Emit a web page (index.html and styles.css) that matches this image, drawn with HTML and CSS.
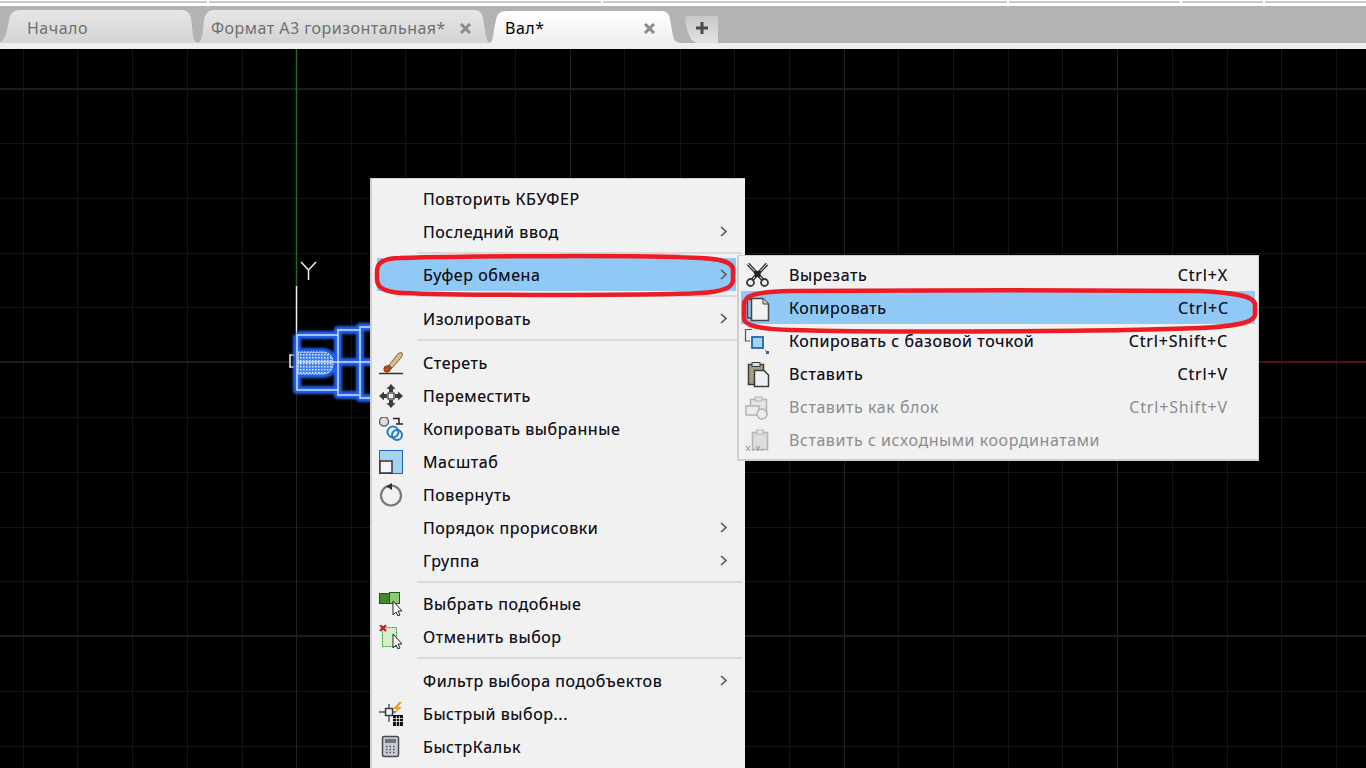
FILE: index.html
```html
<!DOCTYPE html>
<html lang="ru">
<head>
<meta charset="utf-8">
<title>Вал</title>
<link rel="stylesheet" href="styles.css">
</head>
<body>
<div class="topstrip">
  <i class="seg s1"></i><i class="seg s2"></i><i class="seg s3"></i><i class="seg s4"></i><i class="seg s5"></i><i class="seg s6"></i>
</div>
<div class="tabbar">
  <div class="tab t1">
    <svg class="tabshape" width="197" height="37"><defs><linearGradient id="g1" x1="0" y1="0" x2="0" y2="1"><stop offset="0" stop-color="#e6e6e6"/><stop offset="1" stop-color="#d4d4d4"/></linearGradient></defs><path d="M-4 37C2 37 5 33 7 24L9 14C10 8 13 4 20 4H181C187 4 190 7 191 12L193 30C194 35 196 37 199 37Z" fill="url(#g1)"/></svg>
    <span class="tabtext">Начало</span>
  </div>
  <div class="tab t2">
    <svg class="tabshape" width="293" height="37"><path d="M0 37C3 37 5 33 6 24L7 14C8 8 11 4 18 4H277C282 4 285 7 286 12L289 30C290 35 291 37 294 37Z" fill="url(#g1)"/></svg>
    <span class="tabtext">Формат А3 горизонтальная*</span><svg class="close" width="13" height="13"><path d="M2 2L11 11M11 2L2 11" stroke="#8c8c8c" stroke-width="3"/></svg>
  </div>
  <div class="tab t3">
    <svg class="tabshape" width="188" height="37"><defs><linearGradient id="g2" x1="0" y1="0" x2="0" y2="1"><stop offset="0" stop-color="#ffffff"/><stop offset="1" stop-color="#efefef"/></linearGradient></defs><path d="M-1 37C2 37 3 33 4 24L6 14C7 8 10 5 17 5H172C177 5 179 8 180 13L183 30C184 35 187 37 192 37Z" fill="url(#g2)"/></svg>
    <span class="tabtext on">Вал*</span><svg class="close" width="13" height="13"><path d="M2 2L11 11M11 2L2 11" stroke="#8c8c8c" stroke-width="3"/></svg>
  </div>
  <div class="tab plus">
    <svg class="tabshape" width="33" height="37"><defs><linearGradient id="g3" x1="0" y1="0" x2="0" y2="1"><stop offset="0" stop-color="#c8c8c8"/><stop offset="1" stop-color="#e2e2e2"/></linearGradient></defs><path d="M0 13C0 11 1 10 3 10H33V37H14C6 37 3 30 0 13Z" fill="url(#g3)"/></svg>
    <svg class="plusglyph" width="12" height="12"><path d="M4.500 0h3v4.500H12v3H7.500V12h-3V7.500H0v-3h4.500z" fill="#4a4a4a"/></svg>
  </div>
</div>
<div class="whitestrip"></div>
<main class="canvas">
  <svg class="world" width="1366" height="719" viewBox="0 49 1366 719">
    <defs>
      <pattern id="dots" width="3" height="3" patternUnits="userSpaceOnUse"><rect width="3" height="3" fill="#3f80ee"/><rect width="1.500" height="1.500" fill="#dfeaff"/></pattern>
    </defs>
    <g class="grid-minor">
      <path d="M23.500 49V768M77.500 49V768M132.500 49V768M187.500 49V768M242.500 49V768M351.500 49V768M405.500 49V768M461.500 49V768M515.500 49V768M624.500 49V768M680.500 49V768M734.500 49V768M789.500 49V768M898.500 49V768M953.500 49V768M1008.500 49V768M1062.500 49V768M1172.500 49V768M1227.500 49V768M1281.500 49V768M1336.500 49V768"/>
      <path d="M0 143.500H1366M0 198.500H1366M0 253.500H1366M0 307.500H1366M0 417.500H1366M0 472.500H1366M0 527.500H1366M0 581.500H1366M0 691.500H1366M0 746.500H1366"/>
    </g>
    <g class="grid-major">
      <path d="M570.500 49V768M844.500 49V768M1117.500 49V768M296.500 362V768"/>
      <path class="thick" d="M0 89H1366M0 362H296M0 636H1366"/>
    </g>
    <path class="axis-x" d="M296 362H1366"/>
    <path class="axis-y" d="M296.500 49V286"/>
    <path class="ucs" d="M296.500 286V352"/>
    <path class="ucs" d="M301 262L308.500 270L316 262M308.500 270V280"/>
    <path class="ucs" d="M295 355H290V367H295"/>
    <g class="sel-glow">
      <path d="M297 335H338V330H360V327H372M297 335V390H338V395H360V398H372M338 330V395M360 327V398M297 362H372"/>
      <path d="M298 352H322C330 352 333 357 333 363C333 369 330 374 322 374H298Z"/>
    </g>
    <path class="bullet" d="M298 352H322C330 352 333 357 333 363C333 369 330 374 322 374H298Z"/>
    <g class="sel-line">
      <path d="M297 335H338V330H360V327H372M297 335V390H338V395H360V398H372M338 330V395M360 327V398M297 362H372"/>
    </g>
  </svg>

  <nav class="menu">
    <div class="row"><span class="ic"></span><span class="lb">Повторить КБУФЕР</span></div>
    <div class="row"><span class="ic"></span><span class="lb">Последний ввод</span><svg class="arr" width="7" height="11"><path d="M1 1L6 5.500L1 10" fill="none" stroke="#555" stroke-width="1.600"/></svg></div>
    <div class="sep short"></div>
    <div class="row hi"><span class="ic"></span><span class="lb">Буфер обмена</span><svg class="arr" width="7" height="11"><path d="M1 1L6 5.500L1 10" fill="none" stroke="#555" stroke-width="1.600"/></svg></div>
    <div class="sep"></div>
    <div class="row"><span class="ic"></span><span class="lb">Изолировать</span><svg class="arr" width="7" height="11"><path d="M1 1L6 5.500L1 10" fill="none" stroke="#555" stroke-width="1.600"/></svg></div>
    <div class="sep"></div>
    <div class="row"><span class="ic">
      <svg width="24" height="24"><path d="M0 22.500H24" stroke="#333" stroke-width="1.500"/><path d="M10 14L18 4C19 2 22 1 23 2C24 3 23 6 21 8L13 17Z" fill="#d8bd82" stroke="#7c6a48"/><path d="M10 14L13 17L11 19L8 16Z" fill="#9aa0a6" stroke="#555"/><circle cx="8" cy="18" r="3.200" fill="#c44a08" stroke="#6e2a04" stroke-width=".7"/></svg>
    </span><span class="lb">Стереть</span></div>
    <div class="row"><span class="ic">
      <svg width="24" height="24"><rect x="9" y="9" width="6" height="6" fill="#eee" stroke="#333" stroke-width="1.200"/><path d="M12 0L16.500 5H14V8H10V5H7.500ZM12 24L16.500 19H14V16H10V19H7.500ZM0 12L5 7.500V10H8V14H5V16.500ZM24 12L19 7.500V10H16V14H19V16.500Z" fill="#3d3d3d"/></svg>
    </span><span class="lb">Переместить</span></div>
    <div class="row"><span class="ic">
      <svg width="24" height="24"><circle cx="5" cy="4.500" r="4.500" fill="#ddd" stroke="#666" stroke-width="1.500"/><path d="M14 1.500H20V7M17 7H24" fill="none" stroke="#222" stroke-width="1.500"/><circle cx="14" cy="15" r="5.500" fill="#e8f2fa" stroke="#2478c8" stroke-width="2"/><circle cx="18" cy="18" r="5" fill="none" stroke="#2478c8" stroke-width="2"/></svg>
    </span><span class="lb">Копировать выбранные</span></div>
    <div class="row"><span class="ic">
      <svg width="24" height="24"><rect x=".5" y=".5" width="23" height="23" fill="#a5d2ef" stroke="#1c68b4"/><rect x="1" y="11" width="12" height="12" fill="#f4f4f4" stroke="#30363d" stroke-width="1.500"/></svg>
    </span><span class="lb">Масштаб</span></div>
    <div class="row"><span class="ic">
      <svg width="24" height="24"><circle cx="12" cy="12.500" r="10" fill="none" stroke="#777" stroke-width="2.200"/><path d="M7 3.500L13 0V7Z" fill="#333"/></svg>
    </span><span class="lb">Повернуть</span></div>
    <div class="row"><span class="ic"></span><span class="lb">Порядок прорисовки</span><svg class="arr" width="7" height="11"><path d="M1 1L6 5.500L1 10" fill="none" stroke="#555" stroke-width="1.600"/></svg></div>
    <div class="row"><span class="ic"></span><span class="lb">Группа</span><svg class="arr" width="7" height="11"><path d="M1 1L6 5.500L1 10" fill="none" stroke="#555" stroke-width="1.600"/></svg></div>
    <div class="sep short"></div>
    <div class="row"><span class="ic">
      <svg width="24" height="24"><rect x=".5" y="1.500" width="11" height="10" fill="#3f8a2c" stroke="#1d5a18"/><rect x="10.500" y=".5" width="10" height="11" fill="#8cc878" stroke="#1d5a18"/><path d="M14 9V23L17 20L19 24L21 23L19 19H23Z" fill="#fff" stroke="#222"/></svg>
    </span><span class="lb">Выбрать подобные</span></div>
    <div class="row"><span class="ic">
      <svg width="24" height="24"><rect x="3.500" y="2.500" width="14" height="19" fill="#d6efc8" stroke="#2c9a2c" stroke-dasharray="2 1"/><path d="M1 0L7 6M7 0L1 6" stroke="#c0202a" stroke-width="2.200"/><path d="M14 9V23L17 20L19 24L21 23L19 19H23Z" fill="#fff" stroke="#222"/></svg>
    </span><span class="lb">Отменить выбор</span></div>
    <div class="sep"></div>
    <div class="row"><span class="ic"></span><span class="lb">Фильтр выбора подобъектов</span><svg class="arr" width="7" height="11"><path d="M1 1L6 5.500L1 10" fill="none" stroke="#555" stroke-width="1.600"/></svg></div>
    <div class="row"><span class="ic">
      <svg width="24" height="24"><path d="M0 10H6M14 10H17M10 2V6M10 14V20" stroke="#555" stroke-width="1.400"/><rect x="6.500" y="6.500" width="7" height="7" fill="#f4f4f4" stroke="#333" stroke-width="1.400"/><path d="M20 0L14 7H18L15 12L23 5H19L23 0Z" fill="#f29a1f"/><rect x="14" y="13" width="10" height="11" fill="#111"/><path d="M14 16.500H24M14 19.500H24M17.500 14V24M20.500 14V24" stroke="#eee" stroke-width=".8"/></svg>
    </span><span class="lb">Быстрый выбор...</span></div>
    <div class="row"><span class="ic">
      <svg width="24" height="24"><rect x="3.500" y="1.500" width="16" height="20" rx="1.500" fill="#c8ccd0" stroke="#434a52" stroke-width="1.500"/><rect x="6" y="4" width="11" height="4" fill="#6e757c"/><path d="M7 11.500H17M7 14.500H17M7 17.500H17" stroke="#4a5058" stroke-width="1.400" stroke-dasharray="1.500 2"/></svg>
    </span><span class="lb">БыстрКальк</span></div>
  </nav>

  <nav class="submenu">
    <div class="row"><span class="ic">
      <svg class="free" width="24" height="24"><path d="M2 1L17 17M21 1L6 17" stroke="#33383e" stroke-width="3.400"/><path d="M2 1L17 17M21 1L6 17" stroke="#f0f0f0" stroke-width="1"/><path d="M8 8H15L14 14H9Z" fill="#222"/><circle cx="4.500" cy="19.500" r="3.500" fill="none" stroke="#33383e" stroke-width="1.800"/><circle cx="18.500" cy="19.500" r="3.500" fill="none" stroke="#33383e" stroke-width="1.800"/></svg>
    </span><span class="lb">Вырезать</span><span class="key">Ctrl+X</span></div>
    <div class="row hi"><span class="ic">
      <svg class="free" width="24" height="24"><path d="M6 3.500H1.500V22H6" fill="none" stroke="#444" stroke-width="1.500"/><path d="M5.500 2.500H17L22.500 8V24.500H5.500Z" fill="#f2f2f2" stroke="#444" stroke-width="1.500"/><path d="M17 2.500V8H22.500" fill="#ccc" stroke="#444"/></svg>
    </span><span class="lb">Копировать</span><span class="key">Ctrl+C</span></div>
    <div class="row"><span class="ic">
      <svg class="free" width="24" height="24"><path d="M6 .5H-.5V12H4" fill="none" stroke="#555" stroke-width="1.200"/><rect x="6" y="8" width="11" height="11" fill="#a5d2ef" stroke="#1c68b4" stroke-width="1.800"/><path d="M17 19L21 23" stroke="#1c68b4" stroke-dasharray="1.500 1.500"/><rect x="20" y="22" width="3" height="3" fill="#1c68b4"/></svg>
    </span><span class="lb">Копировать с базовой точкой</span><span class="key">Ctrl+Shift+C</span></div>
    <div class="row"><span class="ic">
      <svg class="free" width="24" height="24"><rect x="2.500" y="2.500" width="15" height="20" fill="#a89b86" stroke="#3c3c3c" stroke-width="1.500"/><rect x="6" y=".5" width="8" height="4" fill="#ddd" stroke="#3c3c3c"/><path d="M8.500 8.500H18L22.500 13V24.500H8.500Z" fill="#eef0f2" stroke="#3c3c3c" stroke-width="1.500"/></svg>
    </span><span class="lb">Вставить</span><span class="key">Ctrl+V</span></div>
    <div class="row dis"><span class="ic">
      <svg class="free" width="24" height="24"><rect x="4.500" y="4.500" width="16" height="15" fill="#e4e4e4" stroke="#b2b2b2" stroke-width="1.500"/><rect x="9" y="2" width="7" height="4" fill="#e4e4e4" stroke="#b2b2b2"/><rect x="0" y="11" width="13" height="9" fill="#ececec" stroke="#b2b2b2" stroke-width="1.500"/><circle cx="16" cy="19" r="5" fill="#ececec" stroke="#b2b2b2" stroke-width="1.500"/></svg>
    </span><span class="lb">Вставить как блок</span><span class="key">Ctrl+Shift+V</span></div>
    <div class="row dis"><span class="ic">
      <svg class="free" width="24" height="24"><rect x="6.500" y="4.500" width="15" height="17" fill="#dcdcdc" stroke="#b2b2b2" stroke-width="1.500"/><rect x="10.500" y="2" width="7" height="4" fill="#e8e8e8" stroke="#b2b2b2"/><path d="M0 18L4 23M4 18L0 23M7 23V22M10 18L12 20.500L14 18M12 20.500V23M16 23V22" stroke="#888" fill="none"/></svg>
    </span><span class="lb">Вставить с исходными координатами</span></div>
  </nav>

  <svg class="marks" width="1366" height="719" viewBox="0 49 1366 719">
    <path d="M400 258C383 258 377 263 377 271V279C377 288 385 292 402 293C470 296 660 295 700 293C722 292 733 288 733 280V270C733 262 722 259 700 258C640 255 470 256 400 258Z"/>
    <path d="M790 291C755 292 744 295 744 305V318C744 326 760 329 790 330C900 333 1130 331 1200 328C1240 326 1255 322 1255 314V305C1255 297 1240 293 1200 291C1100 290 860 290 790 291Z"/>
  </svg>
</main>
</body>
</html>
```

FILE: styles.css
```css
html, body {
  margin: 0;
  padding: 0;
  width: 1366px;
  height: 768px;
  overflow: hidden;
  background: #000;
  font-family: "Noto Sans", "Open Sans", sans-serif;
}
.topstrip {
  height: 6px;
  background: #fff;
  display: flex;
  gap: 2px;
}
.seg { display: block; height: 2px; margin-top: 1px; background: #c9c9c9; }
.s1 { width: 207px; }
.s2 { width: 392px; }
.s3 { width: 404px; }
.s4 { width: 171px; }
.s5 { width: 81px; }
.s6 { flex: 1; }
.tabbar {
  height: 37px;
  background: #b3b3b3;
  display: flex;
}
.tab {
  position: relative;
  height: 37px;
  display: flex;
  align-items: center;
  box-sizing: border-box;
  padding-top: 7px;
  font-size: 16px;
  letter-spacing: .48px;
  color: #6f6f6f;
}
.tabshape { position: absolute; left: 0; top: 0; overflow: visible; }
.tabtext { position: relative; white-space: nowrap; }
.tabtext.on { color: #000; }
.close { position: relative; margin-left: auto; flex: none; }
.t1 { width: 197px; padding-left: 27px; }
.t2 { width: 293px; padding-left: 14px; padding-right: 18px; }
.t3 { width: 188px; padding-left: 15px; padding-right: 22px; }
.plus { width: 33px; margin-left: 7px; padding-left: 11px; padding-top: 6px; }
.plusglyph { position: relative; }
.whitestrip { height: 6px; background: #efefef; }
.canvas {
  position: relative;
  height: 719px;
  background: #000;
  overflow: hidden;
}
.world, .marks { position: absolute; left: 0; top: 0; }
.marks { fill: none; stroke: #ed1c24; stroke-width: 4.500px; }
.grid-minor path { stroke: #131318; stroke-width: 1px; fill: none; shape-rendering: crispEdges; }
.grid-major path { stroke: #20202a; stroke-width: 1px; fill: none; shape-rendering: crispEdges; }
.grid-major .thick { stroke: #1c1c24; stroke-width: 2px; }
.axis-x { stroke: #4e1414; stroke-width: 2px; shape-rendering: crispEdges; }
.axis-y { stroke: #1f6b1f; stroke-width: 1.500px; }
.ucs { stroke: #f0f0f0; stroke-width: 1.500px; fill: none; }
.sel-glow { filter: blur(1px); }
.sel-glow path { stroke: #2060ea; stroke-width: 8px; fill: none; stroke-linejoin: round; }
.bullet { fill: url(#dots); stroke: #e6f0ff; stroke-width: 1px; stroke-dasharray: 2 1; }
.sel-line path { stroke: #cfe0ff; stroke-width: 1.500px; fill: none; }
.menu, .submenu {
  position: absolute;
  box-sizing: border-box;
  background: #f1f1f1;
  border: 2px solid #cfcfcf;
  border-width: 1px 0 0 2px;
  font-size: 16px;
  letter-spacing: .56px;
  color: #101018;
  text-shadow: 0 0 .6px rgba(16, 16, 24, .5);
}
.menu { left: 370px; top: 129px; width: 375px; height: 640px; padding-top: 3px; }
.submenu { left: 737px; top: 206px; width: 522px; height: 206px; padding-top: 2px; border-width: 1px 1px 2px 2px; }
.row {
  height: 33px;
  display: flex;
  align-items: center;
}
.menu .row { padding-right: 18px; }
.menu .hi { margin-left: 5px; margin-right: 9px; padding-right: 9px; }
.menu .hi .ic { width: 46px; padding-left: 0; }
.hi { background: #90c8f6; }
.ic {
  box-sizing: border-box;
  width: 51px;
  padding-left: 7px;
  display: flex;
  align-items: center;
  flex: none;
}
.free { overflow: visible; }
.submenu .row { padding-right: 30px; }
.submenu .row .ic { width: 50px; }
.submenu .hi { margin-left: 2px; margin-right: 3px; padding-right: 26px; }
.submenu .hi .ic { width: 48px; padding-left: 5px; }
.lb { white-space: nowrap; }
.arr, .key { margin-left: auto; flex: none; }
.key { letter-spacing: .85px; }
.dis { color: #8c8c8c; text-shadow: none; }
.sep {
  height: 2px;
  margin: 4px 3px 5px 45px;
  background: #d9d9d9;
}
.short { margin-bottom: 4px; }
```
